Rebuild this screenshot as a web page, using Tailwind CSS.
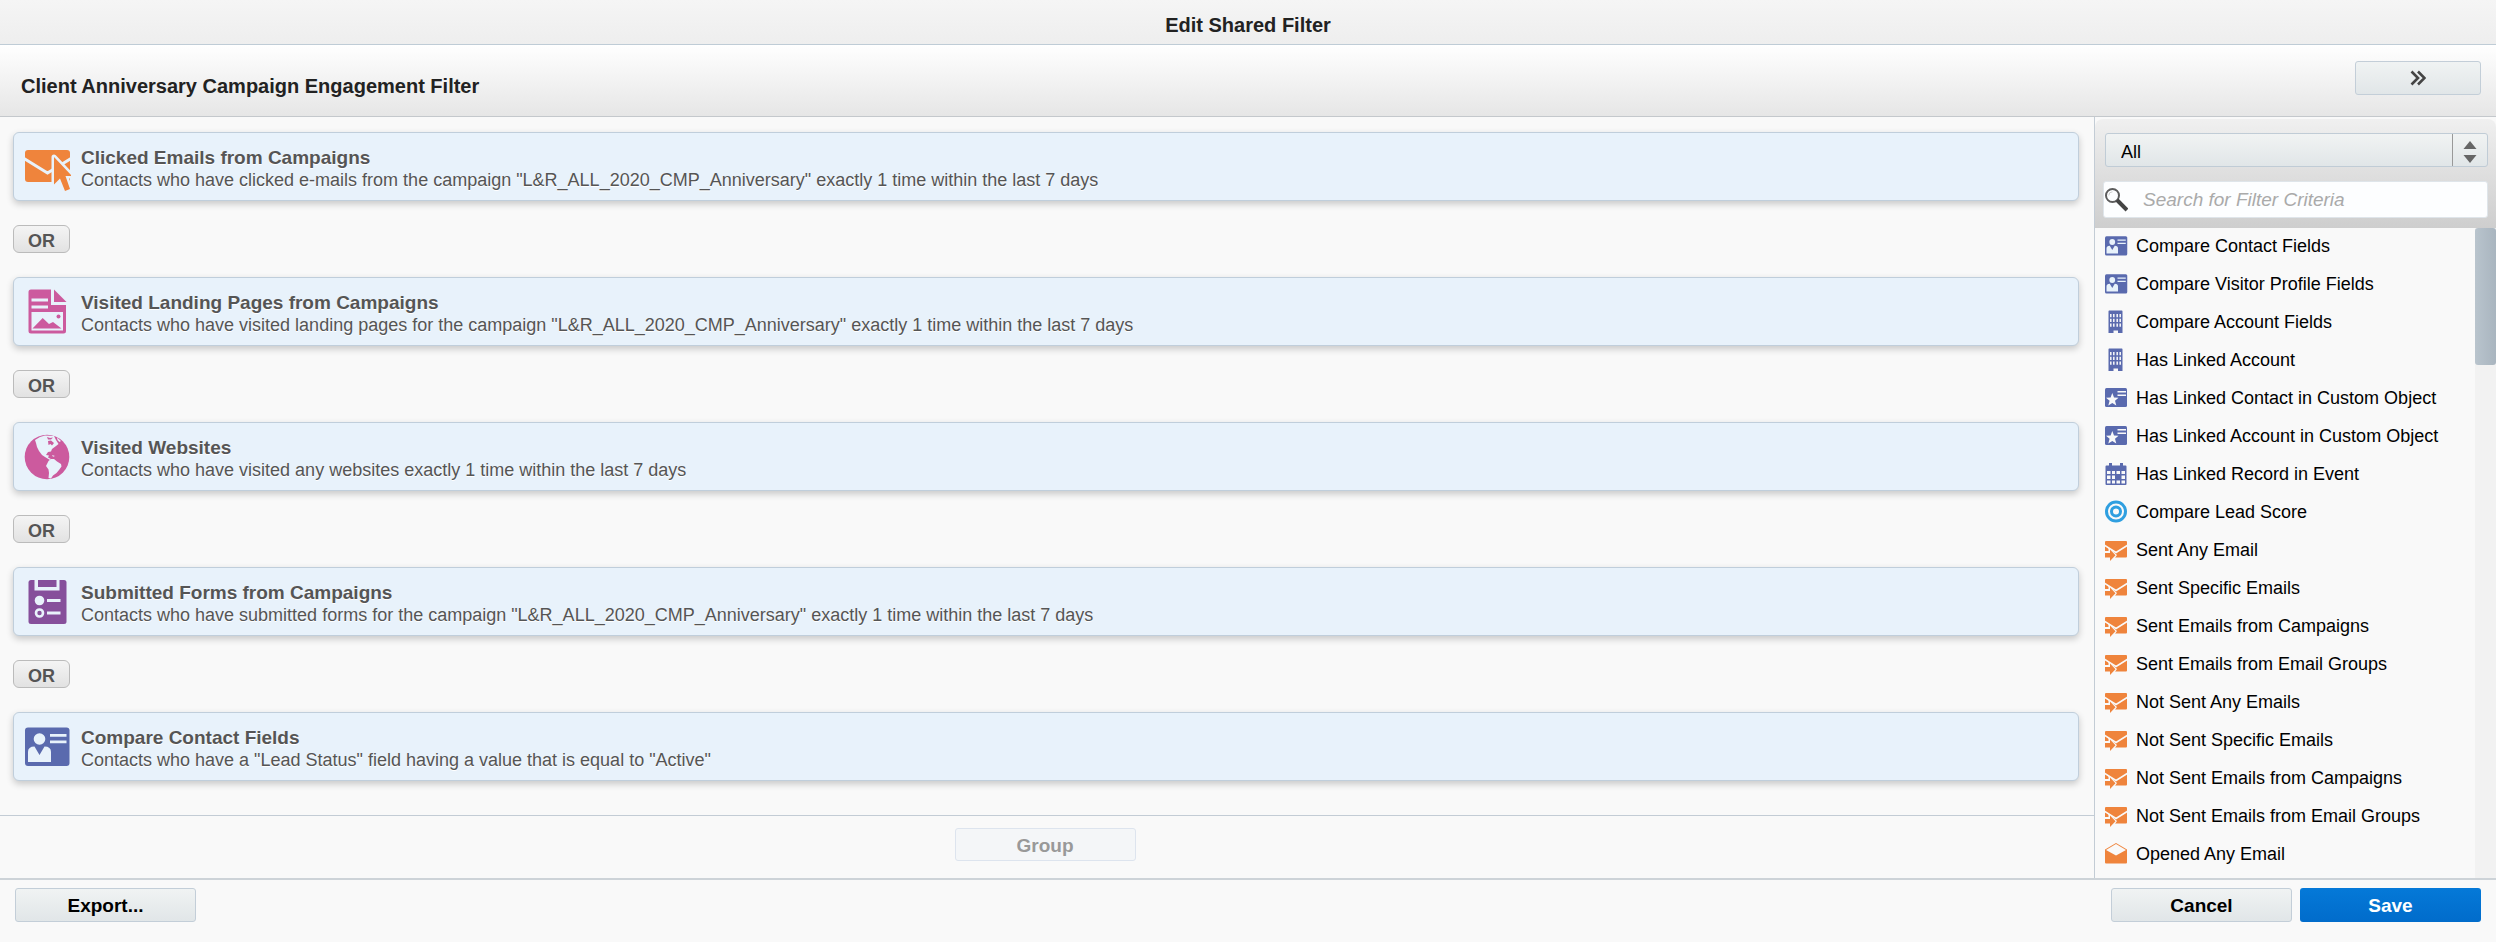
<!DOCTYPE html>
<html lang="en">
  <head>
    <meta charset="UTF-8" />
    <meta name="viewport" content="width=device-width, initial-scale=1.0" />
    <title>Edit Shared Filter</title>
    <script src="https://cdn.jsdelivr.net/npm/@tailwindcss/browser@4"></script>
  </head>
  <body class="flex min-h-screen flex-col bg-[#f9f9f9] font-['Liberation_Sans',Arial,sans-serif] text-[18px] text-black">
    <!-- Icon sprite -->
    <svg class="hidden" xmlns="http://www.w3.org/2000/svg">
      <symbol id="icon-click" viewBox="0 0 48 48">
        <rect x="2" y="7" width="45" height="32" rx="3" fill="#ef843c" />
        <path d="M1 15.500L24.500 30L48 15.500" fill="none" stroke="#e8f2fb" stroke-width="3" />
        <path d="M31 14L49 33H42.500L47 46L42 48L37 35.500L31 41.500Z" fill="#ef843c" stroke="#e8f2fb" stroke-width="5" stroke-linejoin="round" />
        <path d="M31 14L49 33H42.500L47 46L42 48L37 35.500L31 41.500Z" fill="#ef843c" />
      </symbol>
      <symbol id="icon-page" viewBox="0 0 48 48">
        <path d="M8 1.500H28V17H43V43a2.500 2.500 0 0 1-2.500 2.500H8A2.500 2.500 0 0 1 5.500 43V4A2.500 2.500 0 0 1 8 1.500Z" fill="#cc5a9e" />
        <path d="M31 1.500L43.500 14H31Z" fill="#cc5a9e" />
        <path d="M8.500 10.500H25V13.500H8.500ZM8.500 17.500H25V20.500H8.500ZM8.500 24H40V42.500H8.500Z" fill="#e8f2fb" />
        <path d="M9.500 40.500L19.700 30L26 36L30 34L38.500 40.500Z" fill="#cc5a9e" />
        <circle cx="35.500" cy="28.500" r="2" fill="#cc5a9e" />
      </symbol>
      <symbol id="icon-globe" viewBox="0 0 48 48">
        <circle cx="24" cy="24" r="22.300" fill="#cc5a9e" />
        <path d="M12 7L17 4L22 2.500L31 3L33 7L35.500 11L33 13L31 14.500L29 16L28 18.500L25 19L23 22L26 22.500L25 24.500L28 26L27 27L22 24L19 22L16 18L14 14L13 10Z" fill="#e8f2fb" />
        <path d="M25.500 28L28 26L31 26L34 28.500L38 31L38.500 33.500L36 37L33.500 40L30 42.500L28 45.500L25.500 45L26 40L25.500 36.500L23 33Z" fill="#e8f2fb" />
        <path d="M25 8L28 7.500L31 10L29 12.500L27.500 11L25.500 12ZM24 4L27 5L30 4.500L28 6.500H25Z" fill="#cc5a9e" />
        <path d="M34 4.500L38 8L36.500 9L34.500 7ZM29 22L32 23L30 23.700Z" fill="#e8f2fb" />
      </symbol>
      <symbol id="icon-form" viewBox="0 0 48 48">
        <rect x="5.500" y="2" width="38" height="44" rx="2.500" fill="#864f9b" />
        <path d="M11.500 2V12.500H36.500V2H33.500V9H15V2Z" fill="#e8f2fb" />
        <circle cx="16.500" cy="22.500" r="4.800" fill="#e8f2fb" />
        <circle cx="16.500" cy="35" r="3.500" fill="none" stroke="#e8f2fb" stroke-width="2.600" />
        <path d="M24 21H37.500V24H24ZM24 33.500H37.500V36.500H24Z" fill="#e8f2fb" />
      </symbol>
      <symbol id="icon-contact" viewBox="0 0 48 48">
        <rect x="2" y="4.500" width="44.500" height="38.500" rx="3" fill="#5a6aae" />
        <circle cx="16.500" cy="16" r="5.800" fill="#e8f2fb" />
        <path d="M5 39V29Q5 23.500 11.500 23.500L16.500 32L21.500 23.500Q28 23.500 28 29V39Z" fill="#e8f2fb" />
        <path d="M27 11H43.500V13.700H27ZM27 17.500H43.500V20.200H27Z" fill="#e8f2fb" />
      </symbol>
      <symbol id="icon-account" viewBox="0 0 24 24">
        <path d="M5 0.500H18A1 1 0 0 1 18.500 1.500V23H14V20.500H9.500V23H4.500V1.500A1 1 0 0 1 5 0.500Z" fill="#5a6aae" />
        <path d="M6.800 4V17M9.800 4V17M13.200 4V17M16.200 4V17" fill="none" stroke="#f9f9f9" stroke-width="1.500" stroke-dasharray="3.200 1.600" />
      </symbol>
      <symbol id="icon-object" viewBox="0 0 24 24">
        <rect x="1" y="2" width="22" height="19" rx="1.500" fill="#5a6aae" />
        <path d="M8.300 7L10 11.600L14.500 11.800L11 14.800L12.300 19.600L8.300 17L4.300 19.600L5.600 14.800L2 11.800L6.600 11.600Z" fill="#f9f9f9" />
        <path d="M13.500 5H22V6.500H13.500ZM13.500 8.500H22V10H13.500Z" fill="#f9f9f9" />
      </symbol>
      <symbol id="icon-event" viewBox="0 0 24 24">
        <path d="M2.500 3.500H5V1H8V3.500H16V1H19V3.500H21.500A1 1 0 0 1 22.500 4.500V22A1 1 0 0 1 21.500 23H2.500A1 1 0 0 1 1.500 22V4.500A1 1 0 0 1 2.500 3.500Z" fill="#5a6aae" />
        <path d="M3 9H6.500V12H3ZM8 9H11V12H8ZM12.500 9H16V12H12.500ZM17.500 9H21V12H17.500ZM3 13.500H6.500V17H3ZM8 13.500H11V17H8ZM17.500 13.500H21V17H17.500ZM3 18.500H6.500V21.500H3ZM8 18.500H11V21.500H8ZM12.500 18.500H16V21.500H12.500ZM17.500 18.500H21V21.500H17.500Z" fill="#f9f9f9" />
      </symbol>
      <symbol id="icon-score" viewBox="0 0 24 24">
        <circle cx="12" cy="11.500" r="9.500" fill="none" stroke="#2f9fe0" stroke-width="3" />
        <circle cx="12" cy="11.500" r="4.500" fill="none" stroke="#2f9fe0" stroke-width="3" />
      </symbol>
      <symbol id="icon-sent" viewBox="0 0 24 24">
        <path d="M2 3H22A1 1 0 0 1 23 4V18.500A1 1 0 0 1 22 19.500H1V4A1 1 0 0 1 2 3Z" fill="#ef843c" />
        <path d="M0 7L12 14.500L24 7" fill="none" stroke="#f9f9f9" stroke-width="1.500" />
        <path d="M0 13H4.500V9.500L13 17L10.500 20.500H0Z" fill="#f9f9f9" />
        <path d="M1 8.800L3.500 10.500V12.500H1ZM1 15H6V11.500L11.500 17.200L6 23V19.500H1Z" fill="#ef843c" />
      </symbol>
      <symbol id="icon-opened" viewBox="0 0 24 24">
        <path d="M1 7.500L12 1L23 7.500V20.500A1 1 0 0 1 22 21.500H2A1 1 0 0 1 1 20.500Z" fill="#ef843c" />
        <path d="M2 8L12 2L22 8L12 13.500Z" fill="#f9f9f9" />
      </symbol>
    </svg>

    <!-- Title bar -->
    <div class="flex h-[45px] items-center justify-center border-b border-[#bfccd6] bg-linear-to-b from-[#f5f5f5] to-[#eeeeee] pt-1.5">
      <h1 class="text-[20px] font-bold text-[#222]">Edit Shared Filter</h1>
    </div>

    <!-- Filter header -->
    <header class="flex h-[72px] items-start justify-between border-b border-[#c4c8cc] bg-linear-to-b from-white to-[#e6e6e6] pr-[15px] pl-[21px]">
      <h2 class="pt-[29px] text-[20px] leading-[24px] font-bold text-[#222]">Client Anniversary Campaign Engagement Filter</h2>
      <button type="button" aria-label="Collapse panel" class="mt-4 flex h-[34px] w-[126px] items-center justify-center rounded-[3px] border border-[#c3ced8] bg-linear-to-b from-[#f0f3f3] to-[#e1e6e8]">
        <svg class="h-4 w-4" viewBox="0 0 16 16" fill="none" stroke="#444" stroke-width="2.600"><path d="M1.500 1.500L8 8L1.500 14.500M8 1.500L14.500 8L8 14.500" /></svg>
      </button>
    </header>

    <div class="flex flex-1">
      <!-- Criteria -->
      <main class="flex min-w-0 flex-1 flex-col">
        <div class="flex flex-col items-start gap-6 pt-[15px] pr-[15px] pb-6 pl-[13px] text-[#555] [text-shadow:0_1px_0_#fff]">
          <section class="flex h-[69px] w-full items-center gap-2.5 rounded-md border border-[#c0cedb] bg-[#e8f2fb] px-[9px] shadow-[0_3px_7px_rgba(0,0,0,0.2)]">
            <svg class="h-12 w-12 shrink-0"><use href="#icon-click" /></svg>
            <div class="pt-1">
              <h3 class="text-[19px] leading-[23px] font-bold">Clicked Emails from Campaigns</h3>
              <p class="leading-[23px]">Contacts who have clicked e-mails from the campaign "L&amp;R_ALL_2020_CMP_Anniversary" exactly 1 time within the last 7 days</p>
            </div>
          </section>
          <button type="button" class="h-7 w-[57px] rounded-md border border-[#bbb] bg-linear-to-b from-[#f4f4f4] to-[#e2e2e2] pt-1 text-[18px] leading-[22px] font-bold">OR</button>

          <section class="flex h-[69px] w-full items-center gap-2.5 rounded-md border border-[#c0cedb] bg-[#e8f2fb] px-[9px] shadow-[0_3px_7px_rgba(0,0,0,0.2)]">
            <svg class="h-12 w-12 shrink-0"><use href="#icon-page" /></svg>
            <div class="pt-1">
              <h3 class="text-[19px] leading-[23px] font-bold">Visited Landing Pages from Campaigns</h3>
              <p class="leading-[23px]">Contacts who have visited landing pages for the campaign "L&amp;R_ALL_2020_CMP_Anniversary" exactly 1 time within the last 7 days</p>
            </div>
          </section>
          <button type="button" class="h-7 w-[57px] rounded-md border border-[#bbb] bg-linear-to-b from-[#f4f4f4] to-[#e2e2e2] pt-1 text-[18px] leading-[22px] font-bold">OR</button>

          <section class="flex h-[69px] w-full items-center gap-2.5 rounded-md border border-[#c0cedb] bg-[#e8f2fb] px-[9px] shadow-[0_3px_7px_rgba(0,0,0,0.2)]">
            <svg class="h-12 w-12 shrink-0"><use href="#icon-globe" /></svg>
            <div class="pt-1">
              <h3 class="text-[19px] leading-[23px] font-bold">Visited Websites</h3>
              <p class="leading-[23px]">Contacts who have visited any websites exactly 1 time within the last 7 days</p>
            </div>
          </section>
          <button type="button" class="h-7 w-[57px] rounded-md border border-[#bbb] bg-linear-to-b from-[#f4f4f4] to-[#e2e2e2] pt-1 text-[18px] leading-[22px] font-bold">OR</button>

          <section class="flex h-[69px] w-full items-center gap-2.5 rounded-md border border-[#c0cedb] bg-[#e8f2fb] px-[9px] shadow-[0_3px_7px_rgba(0,0,0,0.2)]">
            <svg class="h-12 w-12 shrink-0"><use href="#icon-form" /></svg>
            <div class="pt-1">
              <h3 class="text-[19px] leading-[23px] font-bold">Submitted Forms from Campaigns</h3>
              <p class="leading-[23px]">Contacts who have submitted forms for the campaign "L&amp;R_ALL_2020_CMP_Anniversary" exactly 1 time within the last 7 days</p>
            </div>
          </section>
          <button type="button" class="h-7 w-[57px] rounded-md border border-[#bbb] bg-linear-to-b from-[#f4f4f4] to-[#e2e2e2] pt-1 text-[18px] leading-[22px] font-bold">OR</button>

          <section class="flex h-[69px] w-full items-center gap-2.5 rounded-md border border-[#c0cedb] bg-[#e8f2fb] px-[9px] shadow-[0_3px_7px_rgba(0,0,0,0.2)]">
            <svg class="h-12 w-12 shrink-0"><use href="#icon-contact" /></svg>
            <div class="pt-1">
              <h3 class="text-[19px] leading-[23px] font-bold">Compare Contact Fields</h3>
              <p class="leading-[23px]">Contacts who have a "Lead Status" field having a value that is equal to "Active"</p>
            </div>
          </section>
        </div>

        <div class="mt-auto flex justify-center border-t border-[#c3ccd5] pt-3 pr-1 pb-[17px]">
          <button type="button" disabled class="h-[33px] w-[181px] rounded-[3px] border border-[#dde4ee] bg-[#f4f6f8] pt-0.5 text-[19px] leading-[24px] font-bold text-[#999]">Group</button>
        </div>
      </main>

      <!-- Criteria picker -->
      <aside class="flex w-[402px] shrink-0 flex-col border-l border-[#c3ccd5] pt-0.5">
        <div class="flex flex-col gap-3.5 rounded-t-lg bg-linear-to-b from-[#f0f0f0] to-[#cecece] pt-3.5 pr-2 pb-2.5 pl-2">
          <div class="relative ml-0.5 h-[34px]">
            <select aria-label="Criteria category" class="h-full w-full appearance-none rounded-[3px] border border-[#c0ccd6] bg-linear-to-b from-[#f1f3f3] to-[#e1e6e8] pt-1 pl-[15px] text-[18px]">
              <option>All</option>
            </select>
            <div class="pointer-events-none absolute inset-y-px right-px flex w-[35px] items-center justify-center border-l border-[#999] pt-1">
              <svg class="h-6 w-4" viewBox="0 0 16 24" fill="#666"><path d="M8 1L14.500 9H1.500ZM8 23L14.500 15H1.500Z" /></svg>
            </div>
          </div>
          <label class="flex h-[37px] items-center rounded-[3px] border border-[#dfe5ea] bg-[#fdfeff]">
            <svg class="h-6 w-6 shrink-0" viewBox="0 0 24 24" fill="none">
              <circle cx="8.500" cy="7.500" r="6.500" stroke="#5c5c5c" stroke-width="2" />
              <path d="M13 12L23 22" stroke="#444" stroke-width="4" />
              <path d="M4.800 7.500A3.700 3.700 0 0 1 8.500 3.800" stroke="#ccc" />
            </svg>
            <input type="text" aria-label="Search for Filter Criteria" placeholder="Search for Filter Criteria" class="h-full min-w-0 flex-1 pl-[15px] text-[19px] italic outline-none placeholder:text-[#aaa]" />
          </label>
        </div>

        <div class="flex flex-1">
          <ul class="-mt-px flex-1 pl-[9px] leading-[38px]">
            <li class="flex items-center gap-2"><svg class="h-6 w-6"><use href="#icon-contact" /></svg>Compare Contact Fields</li>
            <li class="flex items-center gap-2"><svg class="h-6 w-6"><use href="#icon-contact" /></svg>Compare Visitor Profile Fields</li>
            <li class="flex items-center gap-2"><svg class="h-6 w-6"><use href="#icon-account" /></svg>Compare Account Fields</li>
            <li class="flex items-center gap-2"><svg class="h-6 w-6"><use href="#icon-account" /></svg>Has Linked Account</li>
            <li class="flex items-center gap-2"><svg class="h-6 w-6"><use href="#icon-object" /></svg>Has Linked Contact in Custom Object</li>
            <li class="flex items-center gap-2"><svg class="h-6 w-6"><use href="#icon-object" /></svg>Has Linked Account in Custom Object</li>
            <li class="flex items-center gap-2"><svg class="h-6 w-6"><use href="#icon-event" /></svg>Has Linked Record in Event</li>
            <li class="flex items-center gap-2"><svg class="h-6 w-6"><use href="#icon-score" /></svg>Compare Lead Score</li>
            <li class="flex items-center gap-2"><svg class="h-6 w-6"><use href="#icon-sent" /></svg>Sent Any Email</li>
            <li class="flex items-center gap-2"><svg class="h-6 w-6"><use href="#icon-sent" /></svg>Sent Specific Emails</li>
            <li class="flex items-center gap-2"><svg class="h-6 w-6"><use href="#icon-sent" /></svg>Sent Emails from Campaigns</li>
            <li class="flex items-center gap-2"><svg class="h-6 w-6"><use href="#icon-sent" /></svg>Sent Emails from Email Groups</li>
            <li class="flex items-center gap-2"><svg class="h-6 w-6"><use href="#icon-sent" /></svg>Not Sent Any Emails</li>
            <li class="flex items-center gap-2"><svg class="h-6 w-6"><use href="#icon-sent" /></svg>Not Sent Specific Emails</li>
            <li class="flex items-center gap-2"><svg class="h-6 w-6"><use href="#icon-sent" /></svg>Not Sent Emails from Campaigns</li>
            <li class="flex items-center gap-2"><svg class="h-6 w-6"><use href="#icon-sent" /></svg>Not Sent Emails from Email Groups</li>
            <li class="flex items-center gap-2"><svg class="h-6 w-6"><use href="#icon-opened" /></svg>Opened Any Email</li>
          </ul>
          <!-- Scrollbar -->
          <div class="w-[21px] bg-[#f2f2f2]">
            <div class="h-[137px] rounded-[3px] bg-linear-to-r from-[#b9c4cd] to-[#a9b5bf]"></div>
          </div>
        </div>
      </aside>
    </div>

    <!-- Footer -->
    <footer class="flex gap-2 border-t-2 border-[#cdd3d8] px-[15px] pt-2 pb-5 text-[19px] leading-[24px] font-bold">
      <button type="button" class="h-[34px] w-[181px] rounded-[3px] border border-[#c3ced8] bg-linear-to-b from-[#f0f3f3] to-[#e1e6e8] pt-0.5">Export...</button>
      <button type="button" class="ml-auto h-[34px] w-[181px] rounded-[3px] border border-[#c3ced8] bg-linear-to-b from-[#f0f3f3] to-[#e1e6e8] pt-0.5">Cancel</button>
      <button type="button" class="h-[34px] w-[181px] rounded-[3px] bg-linear-to-b from-[#0579d8] to-[#016ccb] pt-0.5 text-white">Save</button>
    </footer>
  </body>
</html>
